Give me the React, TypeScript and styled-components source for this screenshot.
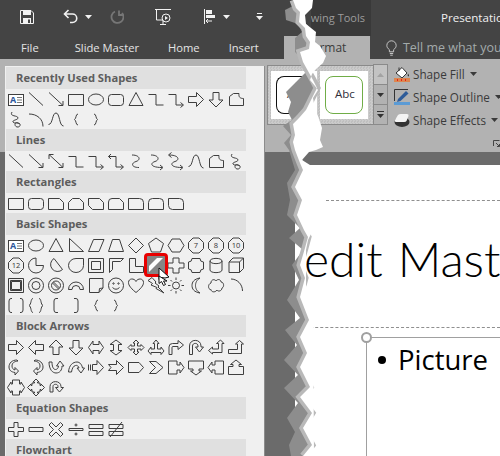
import styled, {createGlobalStyle} from 'styled-components';

const GlobalStyle = createGlobalStyle`
    html, body {
        margin: 0;
        padding: 0;
        width: 500px;
        height: 456px;
        overflow: hidden;
        background: #6b6b6b;
        font-family: "Open Sans", "Liberation Sans", sans-serif;
    }
`;

const circle = (cx: number, cy: number, r: number) =>
    `M${cx - r} ${cy}a${r} ${r} 0 1 0 ${2 * r} 0a${r} ${r} 0 1 0 ${-2 * r} 0Z`;

const D: Record<string, string> = {
    line: 'M3 3.5L17 16.5',
    arrow: 'M3 3.5L17 16.5M12.5 16.5H17V12',
    dbl: 'M3 3.5L17 16.5M12.5 16.5H17V12M3 8V3.5H7.5',
    rect: 'M2.5 5.5H17.5V16.5H2.5Z',
    ellipse: 'M2.5 10.5A7.5 5.5 0 1 1 17.5 10.5A7.5 5.5 0 1 1 2.5 10.5Z',
    round: 'M5.5 5.5H14.5Q17.5 5.5 17.5 8.5V13.5Q17.5 16.5 14.5 16.5H5.5Q2.5 16.5 2.5 13.5V8.5Q2.5 5.5 5.5 5.5Z',
    tri: 'M10 3.5L17 16.5H3Z',
    elbow: 'M2.5 5.5H10V16H17.5',
    elbowA: 'M2.5 5.5H10V16H17M14.5 13.5L17.5 16L14.5 18.5',
    elbowD: 'M5 3L2.5 5.5L5 8M2.5 5.5H10V16H17M14.5 13.5L17.5 16L14.5 18.5',
    curve: 'M6 4C14 4 15 9 10 10.5C5 12 5 16.5 13 16.5',
    curveA: 'M5 4C13 4 14 9 9 10.5C4 12 4 16.5 16 16.5M14 14L17 16.5L14 19',
    curveD: 'M3 4C13 4 14 9 9 10.5C4 12 4 16.5 16 16.5M14 14L17 16.5L14 19M5.5 1.5L2.5 4L5.5 6.5',
    right: 'M2.5 7.5H10.5V3.5L17.5 10.5L10.5 17.5V13.5H2.5Z',
    left: 'M17.5 7.5H9.5V3.5L2.5 10.5L9.5 17.5V13.5H17.5Z',
    up: 'M7 17.5V10H3L10 3L17 10H13V17.5Z',
    down: 'M7 3.5V11H3L10 18L17 11H13V3.5Z',
    freeform: 'M3.5 7.5L7.5 4.5H13C12.5 8 14 9.5 17.5 9.5V16.5H3.5Z',
    scribble: 'M6 3C3 8 12 6 12 9C12 11 6 11 7 13C8 15 13 13 14 15C15 19 9 19 9 15.5C9 13 12 13 13 15',
    arc: 'M3 5C11 5 17 10 17 17.5',
    wave: 'M2.5 15.5C7 15.5 6 4 10 4C14 4 13 17 17.5 17',
    lbrace: 'M12 5C9.5 5 10.5 9.5 8.5 10.5C10.5 11.5 9.5 16 12 16',
    rbrace: 'M8 5C10.5 5 9.5 9.5 11.5 10.5C9.5 11.5 10.5 16 8 16',
    snip1: 'M2.5 5.5H13.5L17.5 9.5V16.5H2.5Z',
    snip2: 'M6.5 5.5H13.5L17.5 9.5V16.5H2.5V9.5Z',
    snipDiag: 'M2.5 5.5H13.5L17.5 9.5V16.5H6.5L2.5 12.5Z',
    snipRound: 'M6 5.5H13.5L17.5 9.5V16.5H2.5V9Q2.5 5.5 6 5.5Z',
    round1: 'M2.5 5.5H13.5Q17.5 5.5 17.5 9.5V16.5H2.5Z',
    roundSame: 'M6.5 5.5H13.5Q17.5 5.5 17.5 9.5V16.5H2.5V9.5Q2.5 5.5 6.5 5.5Z',
    roundDiag: 'M2.5 5.5H13.5Q17.5 5.5 17.5 9.5V16.5H6.5Q2.5 16.5 2.5 12.5Z',
    rtTri: 'M3.5 3.5L17.5 16.5H3.5Z',
    para: 'M7.5 4.5H18L13 16.5H2.5Z',
    trap: 'M6.5 4.5H13.5L17.5 16.5H2.5Z',
    diamond: 'M10 3L17.5 10.5L10 18L2.5 10.5Z',
    pent: 'M10 3L17.5 8.5L14.5 17H5.5L2.5 8.5Z',
    hex: 'M6 4H14L18 10.5L14 17H6L2 10.5Z',
    oct: 'M7 3H13L17.5 7.5V13.5L13 18H7L2.5 13.5V7.5Z',
    pie: 'M10 3A7.5 7.5 0 1 0 17.5 10.5H10Z',
    chord: 'M8 3.5L16.5 14.5A7 7 0 1 1 8 3.5Z',
    tear: 'M17.5 3.5V10.5A7.5 7 0 1 1 10 3.5Z',
    frame: 'M2.5 3.5H17.5V17.5H2.5ZM5.5 6.5H14.5V14.5H5.5Z',
    halfFrame: 'M3.5 3.5H17.5L14.5 6.5H6.5V14.5L3.5 17.5Z',
    ell: 'M3.5 3.5H9.5V11.5H17.5V17.5H3.5Z',
    stripe: 'M3 17V11L11 3H17Z',
    cross: 'M7 3H13V8H18V13H13V18H7V13H2V8H7Z',
    plaque: 'M6 3.5H14Q14 7 17.5 7V14Q14 14 14 17.5H6Q6 14 2.5 14V7Q6 7 6 3.5Z',
    can: 'M4 6C4 2.5 16 2.5 16 6V15C16 18.5 4 18.5 4 15ZM4 6C4 9.5 16 9.5 16 6',
    cube: 'M3 7L7 3H17.5V13.5L13.5 17.5H3ZM3 7H13.5V17.5M13.5 7L17.5 3',
    bevel: 'M2.5 3.5H17.5V17.5H2.5ZM4.5 5.5H15.5V15.5H4.5ZM5.5 6.5H14.5V14.5H5.5Z',
    donut: circle(10, 10.5, 7.5) + circle(10, 10.5, 4),
    noSym: circle(10, 10.5, 7.5) + circle(10, 10.5, 4.5) + 'M6.5 8L12.5 14M7.5 7L13.5 13',
    blockArc: 'M2.5 14.5A7.5 7.5 0 0 1 17.5 14.5H14A4 4 0 0 0 6 14.5Z',
    folded: 'M3.5 3.5H17V13L13 17.5H3.5ZM13 17.5L13.5 13.5L17 13',
    smiley: circle(10, 10.5, 7.5) + circle(7.5, 8.5, 0.7) + circle(12.5, 8.5, 0.7) + 'M6.5 12.5Q10 16 13.5 12.5',
    heart: 'M10 17.5C3 12 2.5 9 2.5 7.5C2.5 3 8.5 3 10 6.5C11.5 3 17.5 3 17.5 7.5C17.5 9 17 12 10 17.5Z',
    bolt: 'M6 2.5L10 7L9 8L13 11L12 12L18 18L10 13.5L11 12.5L5 10L6.5 8.5L2 5.5Z',
    sun: circle(10, 10.5, 3.5) + 'M10 2.5V5M10 16V18.5M2 10.5H4.5M15.5 10.5H18M4.5 5L6 6.5M14 14.5L15.5 16M4.5 16L6 14.5M14 6.5L15.5 5',
    moon: 'M14 3C8 4 6 7 6 10.5C6 14 8 17 14 18C10.5 16 9.5 13 9.5 10.5C9.5 8 10.5 5 14 3Z',
    cloud: 'M5 8C5 4 9 4 10 6C11.5 3.5 15 4.5 15 7C18 7 18.5 12 16 13C16 16 12 17 11 15C9 18 5 17 5 14.5C2 15 1.5 9 5 8Z',
    arcSm: 'M5 4C11 4 16.5 9 16.5 16',
    brackets: 'M6 3.5H5Q3 3.5 3 6V15Q3 17.5 5 17.5H6M14 3.5H15Q17 3.5 17 6V15Q17 17.5 15 17.5H14',
    braces: 'M7 3.5C4.5 3.5 5.5 9.5 3 10.5C5.5 11.5 4.5 17.5 7 17.5M13 3.5C15.5 3.5 14.5 9.5 17 10.5C14.5 11.5 15.5 17.5 13 17.5',
    lbracket: 'M12 3.5H10Q8 3.5 8 6V15Q8 17.5 10 17.5H12',
    rbracket: 'M8 3.5H10Q12 3.5 12 6V15Q12 17.5 10 17.5H8',
    lr: 'M2.5 10.5L7 4V7.5H13V4L17.5 10.5L13 17V13.5H7V17Z',
    ud: 'M10 3L16 7.5H12.5V13.5H16L10 18L4 13.5H7.5V7.5H4Z',
    quad: 'M10 3L13 6H11.5V9H15V7.5L18 10.5L15 13.5V12H11.5V15H13L10 18L7 15H8.5V12H5V13.5L2 10.5L5 7.5V9H8.5V6H7Z',
    lru: 'M10 3L13 6.5H11.5V12H15V10L18 14L15 17.5V15.5H5V17.5L2 14L5 10V12H8.5V6.5H7Z',
    bent: 'M3 17.5V10Q3 6.5 6.5 6.5H12V3.5L17.5 8L12 12.5V9.5H7Q6 9.5 6 10.5V17.5Z',
    uturn: 'M3.5 17.5V9C3.5 1.5 15 1.5 15 9V10H17.5L13.5 15L9.5 10H12V9C12 5.5 6.5 5.5 6.5 9V17.5Z',
    leftUp: 'M2.5 13.5L6.5 10V12H12.5V6.5H10.5L14.5 3L18 6.5H16V15.5H6.5V17Z',
    bentUp: 'M2.5 12.5H11.5V7H9.5L13.5 3.5L17.5 7H15.5V16.5H2.5Z',
    curveR: 'M11 3C6 3 3 6 3 10C3 13 5 15 9 15.5V18L12.5 14L9 10.5V13C7 12.5 6 11 6 9C6 6 8 4.5 12 4Z',
    curveL: 'M9 3C14 3 17 6 17 10C17 13 15 15 11 15.5V18L7.5 14L11 10.5V13C13 12.5 14 11 14 9C14 6 12 4.5 8 4Z',
    curveU: 'M3 5C3 13 7 16 10 16C14 16 16 13 16 9H18L14 4L10.5 9H12.5C12.5 11 11 12.5 9.5 12.5C7 12.5 6 9 6 5Z',
    curveDn: 'M2.5 15C3 8 7 5 11 5C14 5 16 8 16.5 11H18.5L15 16L11 11H13C12.5 9 11 8 9.5 8.5C7 9 6 12 5.5 15Z',
    striped: 'M2.5 7.5V13.5M4.5 7.5V13.5M6.5 7.5H11V3.5L17.5 10.5L11 17.5V13.5H6.5Z',
    notched: 'M2.5 7.5H10.5V3.5L17.5 10.5L10.5 17.5V13.5H2.5L5 10.5Z',
    home: 'M2.5 5.5H13L17.5 10.5L13 15.5H2.5Z',
    chevron: 'M3.5 4.5H10L17 10.5L10 16.5H3.5L9.5 10.5Z',
    rCall: 'M2.5 4H11V8H14V5L18 10.5L14 16V13H11V17H2.5Z',
    dCall: 'M2.5 4H17.5V12H13V14H15.5L10 18L4.5 14H7V12H2.5Z',
    lCall: 'M17.5 4V17H9V13H6V16L2 10.5L6 5V8H9V4Z',
    uCall: 'M2.5 17.5H17.5V9.5H13V7.5H15.5L10 3L4.5 7.5H7V9.5H2.5Z',
    lrCall: 'M6.5 3H13.5V7H15V5L18.5 10.5L15 16V14H13.5V18H6.5V14H5V16L1.5 10.5L5 5V7H6.5Z',
    qCall: 'M10 2L13 5H11.5V6H14V8.5H15V7L18.5 10.5L15 14V12.5H14V15H11.5V16H13L10 19L7 16H8.5V15H6V12.5H5V14L1.5 10.5L5 7V8.5H6V6H8.5V5H7Z',
    circ: 'M4 15V9.5C4 3 15 3 15 9.5V10.5H17.5L13.5 15L9.5 10.5H12V9.5C12 6.5 7 6.5 7 9.5V15Z',
    plus: 'M8 3.5H12V8.5H17.5V12.5H12V17.5H8V12.5H2.5V8.5H8Z',
    minus: 'M3 8.5H17V12.5H3Z',
    mult: 'M5.5 3.5L10 8L14.5 3.5L17 6L12.5 10.5L17 15L14.5 17.5L10 13L5.5 17.5L3 15L7.5 10.5L3 6Z',
    divide: 'M3 9.5H17V11.5H3Z' + circle(10, 6, 1) + circle(10, 15, 1),
    equal: 'M3 5.5H17V9.5H3ZM3 12.5H17V16.5H3Z',
    neq: 'M3 5.5H17V9.5H3ZM3 12.5H17V16.5H3ZM4 18L16 3',
};

const SECTIONS: {title: string; shapes: string[]}[] = [
    {
        title: 'Recently Used Shapes',
        shapes: ['textbox', 'line', 'arrow', 'rect', 'ellipse', 'round', 'tri', 'elbow', 'elbowA', 'right', 'down', 'freeform',
            'scribble', 'arc', 'wave', 'lbrace', 'rbrace'],
    },
    {
        title: 'Lines',
        shapes: ['line', 'arrow', 'dbl', 'elbow', 'elbowA', 'elbowD', 'curve', 'curveA', 'curveD', 'wave', 'freeform', 'scribble'],
    },
    {
        title: 'Rectangles',
        shapes: ['rect', 'round', 'snip1', 'snip2', 'snipDiag', 'snipRound', 'round1', 'roundSame', 'roundDiag'],
    },
    {
        title: 'Basic Shapes',
        shapes: ['textbox', 'ellipse', 'tri', 'rtTri', 'para', 'trap', 'diamond', 'pent', 'hex', 'oct:7', 'oct:8', 'oct:10',
            'oct:12', 'pie', 'chord', 'tear', 'frame', 'halfFrame', 'ell', 'stripe', 'cross', 'plaque', 'can', 'cube',
            'bevel', 'donut', 'noSym', 'blockArc', 'folded', 'smiley', 'heart', 'bolt', 'sun', 'moon', 'cloud', 'arcSm',
            'brackets', 'braces', 'lbracket', 'rbracket', 'lbrace', 'rbrace'],
    },
    {
        title: 'Block Arrows',
        shapes: ['right', 'left', 'up', 'down', 'lr', 'ud', 'quad', 'lru', 'bent', 'uturn', 'leftUp', 'bentUp',
            'curveR', 'curveL', 'curveU', 'curveDn', 'striped', 'notched', 'home', 'chevron', 'rCall', 'dCall', 'lCall', 'uCall',
            'lrCall', 'qCall', 'circ'],
    },
    {
        title: 'Equation Shapes',
        shapes: ['plus', 'minus', 'mult', 'divide', 'equal', 'neq'],
    },
    {title: 'Flowchart', shapes: []},
];

// left edge of the torn paper strip, top to bottom
const TEAR_LEFT = [[293, 0], [296, 8], [300, 12], [299, 22], [305, 28], [306, 36], [310, 42], [309, 49], [300, 52], [303, 62],
    [308, 71], [313, 80], [317, 88], [311, 100], [306, 110], [299, 118], [293, 124], [295, 135], [293, 142], [295, 150],
    [300, 163], [303, 170], [295, 187], [302, 200], [297, 215], [304, 230], [308, 237], [305, 248], [300, 265], [305, 278],
    [300, 297], [309, 320], [300, 337], [307, 353], [300, 367], [310, 387], [300, 397], [312, 413], [303, 428], [312, 445], [303, 456]];
const TEAR_RIGHT = [[313, 0], [312, 8], [305, 15], [306, 24], [316, 32], [315, 42], [320, 46], [326, 56], [323, 63], [316, 69],
    [312, 74], [310, 80], [315, 86], [318, 90], [313, 98], [315, 110], [318, 116], [322, 128], [320, 140], [323, 147], [316, 150],
    [309, 152], [302, 160], [310, 165], [313, 230], [308, 240], [306, 250], [306, 285], [313, 300], [314, 456]];
const SHADOW_LEFT = [[293, 0], [293, 6], [285, 10], [286, 20], [298, 24], [302, 32], [295, 38], [295, 52], [299, 56], [300, 62], [306, 72],
    [296, 82], [286, 92], [291, 102], [288, 112], [292, 120], [283, 126], [291, 135], [284, 143], [289, 150], [295, 170],
    [287, 183], [290, 200], [287, 215], [300, 228], [289, 238], [303, 250], [292, 265], [299, 280], [287, 300], [300, 318],
    [285, 330], [297, 345], [284, 360], [298, 375], [284, 388], [298, 403], [287, 418], [295, 432], [289, 445], [291, 456]];

const pts = (list: number[][]) => list.map((p) => p.join(',')).join(' ');

const ShapeIcon = ({name}: {name: string}) => {
    const [key, label] = name.split(':');
    if (key === 'textbox') {
        return (
            <Glyph viewBox="0 0 20 20">
                <rect x="2.5" y="5.5" width="15" height="11" fill="#fff"/>
                <text x="4" y="13.5" fontSize="9" fontWeight="700" fill="#2b579a" stroke="none">A</text>
                <path d="M11 8.5H16M11 11H16M11 13.5H16" stroke="#777"/>
            </Glyph>
        );
    }
    return (
        <Glyph viewBox="0 0 20 20" $filled={key === 'stripe'}>
            <path d={D[key]}/>
            {label && <text x="10" y="13" fontSize="7.5" textAnchor="middle" fill="#333" stroke="none">{label}</text>}
        </Glyph>
    );
};

const Caret = () => (
    <svg width="7" height="4" viewBox="0 0 7 4"><path d="M0 0H7L3.5 4Z" fill="currentColor"/></svg>
);

const App = () => {
    return (
        <Page>
            <GlobalStyle/>
            <TitleBar>
                <QuickAccess>
                    <QatIcon $left={20} width="14" height="14" viewBox="0 0 14 14">
                        <path d="M.5.5H11L13.5 3V13.5H.5Z" fill="none" stroke="#f2f2f2"/>
                        <path d="M3 1V5H11V1ZM3 8V13H11V8Z" fill="#f2f2f2"/>
                        <path d="M8 9.5H10V13H8Z" fill="#444"/>
                    </QatIcon>
                    <QatIcon $left={29} width="15" height="15" viewBox="0 0 15 15">
                        <path d="M5.5 1L1.5 5L5.5 9M1.5 5H9.5A4 4 0 0 1 9.5 13.5H7" fill="none" stroke="#f2f2f2" strokeWidth="1.6"/>
                    </QatIcon>
                    <QatCaret><Caret/></QatCaret>
                    <QatIcon $left={18} width="14" height="15" viewBox="0 0 14 15">
                        <path d="M9 1.5V6H13.5M12 4A6 6 0 1 1 5 2.5" fill="none" stroke="#767676" strokeWidth="1.8"/>
                    </QatIcon>
                    <QatIcon $left={31} width="16" height="16" viewBox="0 0 16 16">
                        <path d="M0 .5H16M1.5 1V11H7M5 15.5H11M8 11V15" fill="none" stroke="#f2f2f2"/>
                        <circle cx="11" cy="9" r="4" fill="none" stroke="#f2f2f2"/>
                        <path d="M10 7V11L13 9Z" fill="#f2f2f2"/>
                    </QatIcon>
                    <QatIcon $left={33} width="12" height="15" viewBox="0 0 12 15">
                        <path d="M.5 0V15" stroke="#f2f2f2"/>
                        <path d="M2 1H8V5H2ZM2 6H11V9H2Z" fill="#f2f2f2"/>
                        <path d="M8 12H2M4 10L2 12L4 14" fill="none" stroke="#f2f2f2"/>
                    </QatIcon>
                    <QatCaret><Caret/></QatCaret>
                    <QatIcon $left={26} width="7" height="8" viewBox="0 0 7 8">
                        <path d="M1 .5H6" stroke="#f2f2f2"/>
                        <path d="M0 3H7L3.5 7Z" fill="#f2f2f2"/>
                    </QatIcon>
                </QuickAccess>
                <ContextHeader>Drawing Tools</ContextHeader>
                <DocTitle>Presentatio</DocTitle>
            </TitleBar>

            <TabBar>
                <Tab $gap={36}>File</Tab>
                <Tab $gap={29}>Slide Master</Tab>
                <Tab $gap={29}>Home</Tab>
                <Tab $gap={29}>Insert</Tab>
                <Tab $gap={0}>T</Tab>
                <ActiveTab>Format</ActiveTab>
                <TellMe>
                    <svg width="11" height="16" viewBox="0 0 13 18">
                        <path d="M4 13.5V11C2 9.5 1 8 1 6A5.5 5.5 0 0 1 12 6C12 8 11 9.5 9 11V13.5ZM4.5 15.5H8.5M5 17.5H8" fill="none" stroke="#dcdcdc"/>
                    </svg>
                    Tell me what you
                </TellMe>
            </TabBar>

            <Ribbon>
                <Gallery>
                    <GalleryItem>
                        <ShapeSample $stroke="#111" $accent="#2e75b6" $pad={10}>Abc</ShapeSample>
                    </GalleryItem>
                    <GalleryItem>
                        <ShapeSample $stroke="#70ad47" $accent="#70ad47" $pad={9}>Abc</ShapeSample>
                    </GalleryItem>
                    <GalleryScroll>
                        <ScrollButton $disabled>
                            <svg width="7" height="4" viewBox="0 0 7 4"><path d="M0 4H7L3.5 0Z" fill="#a2a2a2"/></svg>
                        </ScrollButton>
                        <ScrollButton>
                            <svg width="7" height="4" viewBox="0 0 7 4"><path d="M0 0H7L3.5 4Z" fill="#333"/></svg>
                        </ScrollButton>
                        <ScrollButton>
                            <svg width="7" height="7" viewBox="0 0 7 7"><path d="M0 .5H7" stroke="#333"/><path d="M0 3H7L3.5 7Z" fill="#333"/></svg>
                        </ScrollButton>
                    </GalleryScroll>
                </Gallery>
                <Commands>
                    <Command>
                        <svg width="16" height="16" viewBox="0 0 16 16">
                            <path d="M2 7L8 1.5L13 7L8 12Z" fill="#fff" stroke="#333"/>
                            <path d="M5 5V1.5" stroke="#333"/>
                            <path d="M14 7.5C15 9 15.5 10 14.5 10.5C13.5 10 13.5 9 14 7.5Z" fill="#333"/>
                            <path d="M0 12H16V16H0Z" fill="#dd8650"/>
                            <path d="M3 14H4M7 14H8M11 14H12" stroke="#e00" strokeWidth="1.5"/>
                        </svg>
                        Shape Fill
                        <Caret/>
                    </Command>
                    <Command>
                        <svg width="16" height="16" viewBox="0 0 16 16">
                            <path d="M.5 12V.5H14" fill="none" stroke="#333"/>
                            <path d="M4 10L12 2L14.5 4.5L6.5 12L3 13Z" fill="#2f5c99"/>
                            <path d="M0 13H16V16H0Z" fill="#5b9bd5"/>
                        </svg>
                        Shape Outline
                        <Caret/>
                    </Command>
                    <Command>
                        <svg width="16" height="16" viewBox="0 0 16 16">
                            <ellipse cx="8" cy="10" rx="7.5" ry="5" fill="#333"/>
                            <path d="M1 8L4 3Q5 2 7 2H13Q15 2 14.5 4L12.5 9Q12 10 10 10H3Q0 10 1 8Z" fill="#f4f4f4"/>
                        </svg>
                        Shape Effects
                        <Caret/>
                    </Command>
                </Commands>
                <Launcher width="7" height="7" viewBox="0 0 7 7">
                    <path d="M.5 6V.5H6.5" fill="none" stroke="#444"/>
                    <path d="M3 3L6.5 6.5M4 6.5H6.5V4" fill="none" stroke="#444"/>
                </Launcher>
            </Ribbon>

            <Workspace>
                <Slide>
                    <TopRule/>
                    <TitleBox>
                        <SlideTitle>edit Mast</SlideTitle>
                    </TitleBox>
                    <BodyBox>
                        <Handle/>
                        <BulletLine>
                            <Bullet/>
                            Picture
                        </BulletLine>
                    </BodyBox>
                </Slide>
            </Workspace>

            <ShapesPanel>
                {SECTIONS.map((section) => (
                    <section key={section.title}>
                        <SectionHeader>{section.title}</SectionHeader>
                        <ShapeGrid>
                            {section.shapes.map((name, i) => (
                                <ShapeCell key={i} $selected={name === 'stripe'}>
                                    <ShapeIcon name={name}/>
                                    {name === 'stripe' && (
                                        <Pointer width="13" height="19" viewBox="0 0 13 19">
                                            <path d="M1 1V12.5L3.5 10.5L7 11L11 10Z" fill="#fff" stroke="#111"/>
                                            <path d="M1 9V16.5L3.5 14.5L5.5 18.5L7.5 17.5L5.5 14H9Z" fill="#fff" stroke="#111"/>
                                        </Pointer>
                                    )}
                                </ShapeCell>
                            ))}
                        </ShapeGrid>
                    </section>
                ))}
            </ShapesPanel>

            <TearOverlay width="500" height="456" viewBox="0 0 500 456">
                <polygon points={pts([...SHADOW_LEFT, ...[...TEAR_LEFT].reverse()])} fill="#8d8d8d"/>
                <polyline points={pts(TEAR_LEFT)} fill="none" stroke="#b9b9b9" strokeWidth="7"/>
                <polygon points={pts([...TEAR_LEFT, ...[...TEAR_RIGHT].reverse()])} fill="#fff"/>
            </TearOverlay>
        </Page>
    );
};

export default App;

const Page = styled.div`
    position: relative;
    width: 500px;
    height: 456px;
    overflow: hidden;
    display: flex;
    flex-direction: column;
    background: #6b6b6b;
`;

const TitleBar = styled.div`
    display: flex;
    height: 36px;
    background: #444444;
    flex-shrink: 0;
`;

const QuickAccess = styled.div`
    width: 311px;
    flex-shrink: 0;
    display: flex;
    align-items: center;
    height: 33px;
`;

const QatIcon = styled.svg<{ $left: number }>`
    margin-left: ${(p) => p.$left}px;
    flex-shrink: 0;
`;

const QatCaret = styled.span`
    display: flex;
    margin-left: 7px;
    color: #f2f2f2;
`;

const ContextHeader = styled.div`
    width: 60px;
    flex-shrink: 0;
    box-sizing: border-box;
    display: flex;
    justify-content: flex-end;
    background-color: #393939;
    background-image: radial-gradient(#4a4a4a 0.6px, transparent 0.7px);
    background-size: 4px 4px;
    color: #9c9c9c;
    font-size: 11px;
    line-height: 36px;
    white-space: nowrap;
    padding-right: 6px;
    overflow: hidden;
`;

const DocTitle = styled.div`
    margin-left: 70px;
    flex-shrink: 0;
    color: #f0f0f0;
    font-size: 11.6px;
    line-height: 36px;
    white-space: nowrap;
`;

const TabBar = styled.div`
    display: flex;
    height: 23px;
    background: #444444;
    padding-left: 21px;
    flex-shrink: 0;
    font-size: 12.5px;
    line-height: 23px;
`;

const Tab = styled.div<{ $gap: number }>`
    color: #e4e4e4;
    font-size: 11.2px;
    margin-right: ${(p) => p.$gap}px;
    white-space: nowrap;
    flex-shrink: 0;
`;

const ActiveTab = styled.div`
    margin-left: -10px;
    width: 86px;
    flex-shrink: 0;
    box-sizing: border-box;
    padding-left: 22px;
    background: #b2b2b2;
    color: #3c3c3c;
    font-size: 12px;
`;

const TellMe = styled.div`
    display: flex;
    align-items: center;
    flex-shrink: 0;
    gap: 6px;
    margin-left: 16px;
    color: #a3abab;
    white-space: nowrap;
`;

const Ribbon = styled.div`
    display: flex;
    height: 93px;
    background: #b2b2b2;
    padding: 6px 0 0 267px;
    box-sizing: border-box;
    flex-shrink: 0;
    color: #3a3a3a;
`;

const Gallery = styled.div`
    display: flex;
    flex-shrink: 0;
    box-sizing: border-box;
    width: 121px;
    height: 60px;
    gap: 3px;
    padding: 5px 0 0 3px;
    border: 1px solid #8a8a8a;
    background: repeating-conic-gradient(#cbcbcb 0 25%, #bfbfbf 0 50%) 0 0 / 3px 3px;
    position: relative;
`;

const GalleryItem = styled.div`
    width: 46px;
    height: 48px;
    padding: 5px;
    box-sizing: border-box;
    background: #fff;
    &:nth-child(2) {
        width: 48px;
    }
`;

const ShapeSample = styled.div<{ $stroke: string; $accent: string; $pad: number }>`
    box-sizing: border-box;
    height: 38px;
    padding-left: ${(p) => p.$pad}px;
    border: 1.5px solid ${(p) => p.$stroke};
    border-right-color: ${(p) => p.$accent};
    border-radius: 8px;
    color: #30303a;
    font-size: 11.5px;
    line-height: 34px;
    overflow: hidden;
`;

const GalleryScroll = styled.div`
    position: absolute;
    right: -1px;
    top: -1px;
    bottom: -1px;
    width: 15px;
    display: flex;
    flex-direction: column;
`;

const ScrollButton = styled.div<{ $disabled?: boolean }>`
    flex: 1;
    display: flex;
    align-items: center;
    justify-content: center;
    border: 1px solid #8a8a8a;
    margin-top: -1px;
    background: ${(p) => (p.$disabled ? '#c3c3c3' : '#b2b2b2')};
`;

const Commands = styled.div`
    display: flex;
    flex-direction: column;
    flex-shrink: 0;
    margin: -3px 0 0 6px;
`;

const Command = styled.div`
    display: flex;
    align-items: center;
    height: 23px;
    gap: 3px;
    font-size: 11.7px;
    white-space: nowrap;

    svg:last-child {
        margin-left: 2px;
    }
`;

const Launcher = styled.svg`
    position: absolute;
    left: 493px;
    top: 140px;
`;

const Workspace = styled.div`
    flex: 1;
    padding: 13px 0 0 295px;
    background: #6b6b6b;
    min-height: 0;
`;

const Slide = styled.div`
    height: 100%;
    background: #fff;
    padding-top: 35px;
    box-sizing: border-box;
    overflow: hidden;
`;

const TopRule = styled.div`
    margin-left: 31px;
    border-top: 1px dashed #8f8f8f;
`;

const TitleBox = styled.div`
    height: 127px;
    box-sizing: border-box;
    border-bottom: 1px dashed #8f8f8f;
    padding: 28px 0 0 9px;
`;

const SlideTitle = styled.div`
    font-family: Lato, "Open Sans", sans-serif;
    font-weight: 300;
    font-size: 48px;
    line-height: 60px;
    word-spacing: 2px;
    color: #000;
    white-space: nowrap;
`;

const BodyBox = styled.div`
    position: relative;
    margin: 9px 0 0 71px;
    height: 200px;
    border-top: 1px solid #a0a0a0;
    border-left: 1px solid #a0a0a0;
`;

const Handle = styled.span`
    position: absolute;
    left: -6px;
    top: -6px;
    width: 7px;
    height: 7px;
    border: 2px solid #a0a0a0;
    border-radius: 50%;
    background: #fff;
`;

const BulletLine = styled.div`
    display: flex;
    align-items: center;
    gap: 12px;
    padding-left: 11px;
    margin-top: 4px;
    font-family: "Open Sans", Lato, sans-serif;
    font-size: 27.5px;
    line-height: 36px;
    color: #000;
    white-space: nowrap;
`;

const Bullet = styled.span`
    width: 8px;
    height: 8px;
    border-radius: 50%;
    background: #000;
`;

const ShapesPanel = styled.div`
    position: absolute;
    left: 5px;
    top: 66px;
    bottom: 0;
    width: 260px;
    box-sizing: border-box;
    padding: 1px 0 0 1px;
    background: #f0f0f0;
    border-right: 1px solid #8c8c8c;
    overflow: hidden;
`;

const SectionHeader = styled.div`
    width: 240px;
    height: 22px;
    box-sizing: border-box;
    padding-left: 10px;
    background: #e0e0e0;
    color: #5d5d5d;
    font-size: 11.2px;
    font-weight: 700;
    line-height: 22px;
`;

const ShapeGrid = styled.div`
    display: grid;
    grid-template-columns: repeat(12, 20px);
    grid-auto-rows: 20px;
`;

const ShapeCell = styled.div<{ $selected?: boolean }>`
    position: relative;
    width: 20px;
    height: 20px;
    ${(p) => p.$selected && `
        background: #858585;
        outline: 3px solid #e80000;
        outline-offset: -1px;
        border-radius: 2px;
        z-index: 1;
    `}
`;

const Glyph = styled.svg<{ $filled?: boolean }>`
    display: block;
    width: 20px;
    height: 20px;
    fill: ${(p) => (p.$filled ? '#fff' : 'none')};
    stroke: ${(p) => (p.$filled ? 'none' : '#3f3f3f')};
    stroke-width: 1;
    font-family: "Open Sans", sans-serif;
`;

const Pointer = styled.svg`
    position: absolute;
    left: 12px;
    top: 12px;
    z-index: 2;
`;

const TearOverlay = styled.svg`
    position: absolute;
    left: 0;
    top: 0;
    pointer-events: none;
`;
